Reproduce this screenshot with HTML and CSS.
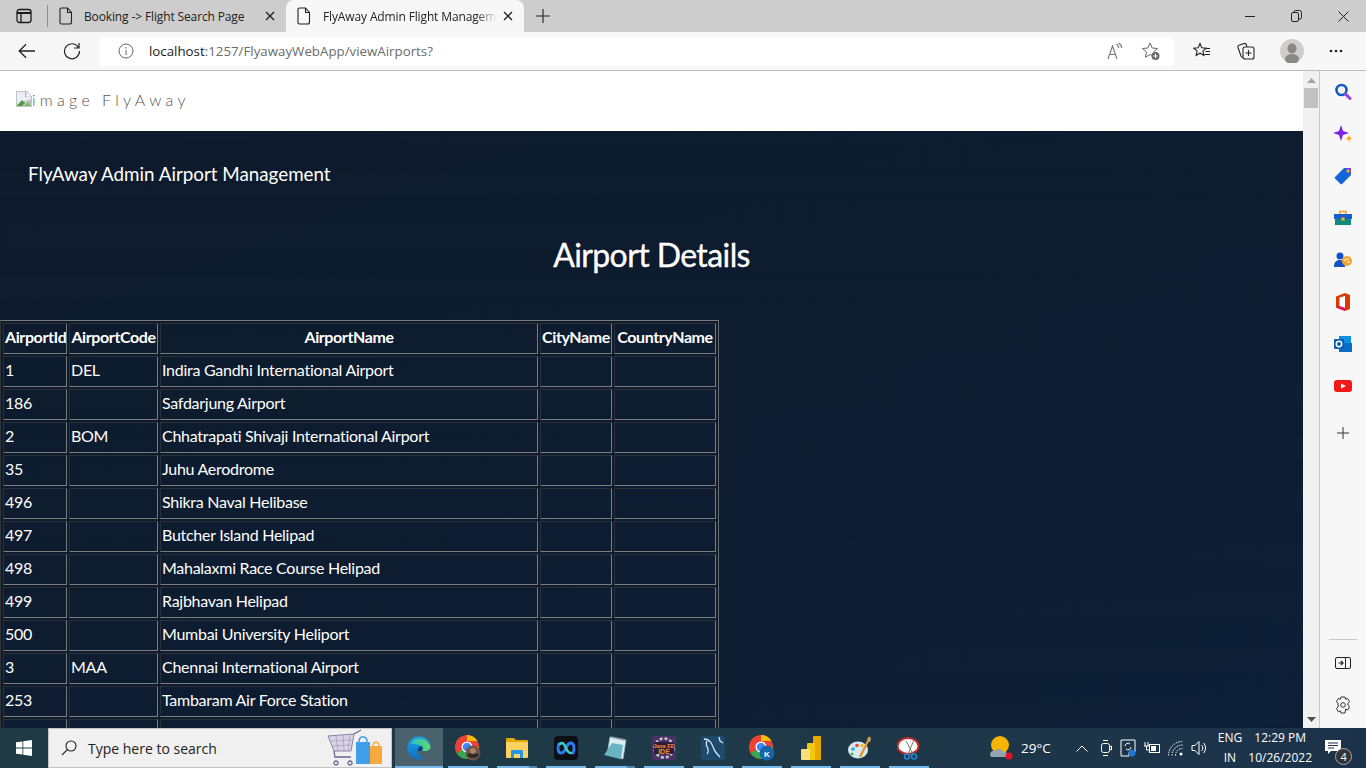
FILE: index.html
```html
<!DOCTYPE html>
<html lang="en">
<head>
<meta charset="utf-8">
<title>FlyAway Admin Flight Management</title>
<link rel="stylesheet" href="styles.css">
</head>
<body>
<div class="app">
  <div class="tabstrip">
    <div class="tabs-btn"><svg width="16" height="16" viewBox="0 0 16 16" fill="none" stroke="#1a1a1a" stroke-width="1.3"><rect x="1" y="1.5" width="14" height="13" rx="2.5"/><path d="M1 5h14" stroke-width="2"/><path d="M5 5v9"/></svg></div>
    <div class="tab-sep"></div>
    <div class="tab">
      <svg class="doc" width="14" height="18" viewBox="0 0 14 18" fill="none" stroke="#222" stroke-width="1.1"><path d="M2.5 1h6l4 4.5v9.5a2 2 0 0 1-2 2h-8a1.5 1.5 0 0 1-1.5-1.5V2.500A1.500 1.500 0 0 1 2.500 1zM8.500 1v4.500h4"/></svg>
      <span class="tab-label">Booking -&gt; Flight Search Page</span>
      <svg class="tab-x" width="10" height="10" viewBox="0 0 10 10" stroke="#222" stroke-width="1.4"><path d="M1 1l8 8M9 1l-8 8"/></svg>
    </div>
    <div class="tab tab-active">
      <svg class="doc" width="14" height="18" viewBox="0 0 14 18" fill="none" stroke="#222" stroke-width="1.1"><path d="M2.500 1h6l4 4.500v9.500a2 2 0 0 1-2 2h-8a1.500 1.500 0 0 1-1.500-1.500V2.500A1.500 1.500 0 0 1 2.500 1zM8.500 1v4.500h4"/></svg>
      <span class="tab-label tab-fade">FlyAway Admin Flight Management</span>
      <svg class="tab-x" width="10" height="10" viewBox="0 0 10 10" stroke="#222" stroke-width="1.4"><path d="M1 1l8 8M9 1l-8 8"/></svg>
    </div>
    <svg class="newtab" width="14" height="14" viewBox="0 0 14 14" stroke="#222" stroke-width="1.1"><path d="M7 0v14M0 7h14"/></svg>
    <div class="winbtns">
      <svg width="10" height="10" viewBox="0 0 10 10" stroke="#222"><path d="M0 5.500h10"/></svg>
      <svg width="11" height="12" viewBox="0 0 11 12" fill="none" stroke="#222"><rect x=".5" y="2.500" width="7" height="9" rx="1.500"/><path d="M3 2.500V2A1.500 1.500 0 0 1 4.500.5h4A2 2 0 0 1 10.500 2.500v5a1.500 1.500 0 0 1-1.500 1.500h-1.500"/></svg>
      <svg width="11" height="11" viewBox="0 0 11 11" stroke="#222"><path d="M.5.5l10 10M10.500.5l-10 10"/></svg>
    </div>
  </div>

  <div class="toolbar">
    <svg class="tool-back" width="18" height="16" viewBox="0 0 18 16" fill="none" stroke="#222" stroke-width="1.3"><path d="M17 8H1.500M8 1.200L1.200 8 8 14.800"/></svg>
    <svg class="tool-reload" width="18" height="18" viewBox="0 0 18 18" fill="none" stroke="#222" stroke-width="1.200"><path d="M15.500 5.500A7.500 7.500 0 1 0 16.500 9M16 1v5h-5"/></svg>
    <div class="address">
      <svg class="addr-info" width="16" height="16" viewBox="0 0 16 16" fill="none" stroke="#666"><circle cx="8" cy="8" r="7"/><path d="M8 7v5M8 4v1.500"/></svg>
      <span class="url"><span class="url-host">localhost</span>:1257/FlyawayWebApp/viewAirports?</span>
      <svg class="addr-read" width="16" height="18" viewBox="0 0 16 18" fill="none" stroke="#777" stroke-width="1.100"><path d="M1 17L5.500 4 10 17M2.500 12.500h6"/><path d="M9 2c1.800.6 2.600 2 2.800 4M11.500 1c2 .8 3 2.400 3.200 5"/></svg>
      <svg class="addr-fav" width="20" height="20" viewBox="0 0 20 20"><path d="M9 2l2.200 5 5.300.5-4 3.500 1.200 5.200L9 13.500l-4.700 2.700L5.500 11l-4-3.500L6.800 7z" fill="none" stroke="#666"/><circle cx="14.500" cy="15" r="4" fill="#666"/><path d="M14.500 12.800v4.400M12.300 15h4.400" stroke="#fff"/></svg>
    </div>
    <svg class="tool-favs" width="18" height="18" viewBox="0 0 18 18" fill="none" stroke="#222" stroke-width="1.100"><path d="M7 1.500l1.800 4.300 4.400.4-3.300 2.900 1 4.400L7 11.200 3.100 13.500l1-4.400L.8 6.200l4.400-.4zM12 6.500h5M12.500 9.500h4.500M11.500 12.500h5.500"/></svg>
    <svg class="tool-coll" width="18" height="18" viewBox="0 0 18 18" fill="none" stroke="#222" stroke-width="1.100"><rect x="6" y="5" width="11" height="12" rx="2"/><path d="M11.500 8v6M8.500 11h6M6 15.500c-1 0-1.500-.5-2-1.500L1 5.500c-.3-1 0-2 1-2.300L7 1.500c1-.3 2 .2 2.500 1.500l.3 2"/></svg>
    <svg class="tool-profile" width="24" height="24" viewBox="0 0 24 24"><circle cx="12" cy="12" r="12" fill="#d0ccca"/><ellipse cx="12" cy="9.500" rx="4.500" ry="5" fill="#8a8886"/><ellipse cx="12" cy="20" rx="7" ry="5" fill="#8a8886"/></svg>
    <svg class="tool-more" width="14" height="4" viewBox="0 0 14 4" fill="#222"><circle cx="2" cy="2" r="1.300"/><circle cx="7" cy="2" r="1.300"/><circle cx="12" cy="2" r="1.300"/></svg>
  </div>

  <div class="viewport">
    <div class="page">
      <header class="site-head">
        <svg class="broken" width="16" height="16" viewBox="0 0 16 16"><path d="M0 0h10l6 6v10H0z" fill="#c4c4c4"/><path d="M10 0l6 6h-6z" fill="#fff" stroke="#999" stroke-width=".6"/><path d="M1 1h8v5h6v2L1 13z" fill="#e8eefa"/><path d="M1 15l5-6 3 3-3 3z" fill="#4c9a3f"/><path d="M8 15l4-4 3 4z" fill="#7dbb6a"/></svg>
        <span class="alt">image</span>
        <span class="brand">FlyAway</span>
      </header>
      <main class="hero">
        <div class="admin-title">FlyAway Admin Airport Management</div>
        <h1 class="details-title">Airport Details</h1>
        <table class="grid">
          <colgroup><col class="c1"><col class="c2"><col class="c3"><col class="c4"><col class="c5"></colgroup>
          <thead><tr><th>AirportId</th><th>AirportCode</th><th>AirportName</th><th>CityName</th><th>CountryName</th></tr></thead>
          <tbody>
            <tr><td>1</td><td>DEL</td><td>Indira Gandhi International Airport</td><td></td><td></td></tr>
            <tr><td>186</td><td></td><td>Safdarjung Airport</td><td></td><td></td></tr>
            <tr><td>2</td><td>BOM</td><td>Chhatrapati Shivaji International Airport</td><td></td><td></td></tr>
            <tr><td>35</td><td></td><td>Juhu Aerodrome</td><td></td><td></td></tr>
            <tr><td>496</td><td></td><td>Shikra Naval Helibase</td><td></td><td></td></tr>
            <tr><td>497</td><td></td><td>Butcher Island Helipad</td><td></td><td></td></tr>
            <tr><td>498</td><td></td><td>Mahalaxmi Race Course Helipad</td><td></td><td></td></tr>
            <tr><td>499</td><td></td><td>Rajbhavan Helipad</td><td></td><td></td></tr>
            <tr><td>500</td><td></td><td>Mumbai University Heliport</td><td></td><td></td></tr>
            <tr><td>3</td><td>MAA</td><td>Chennai International Airport</td><td></td><td></td></tr>
            <tr><td>253</td><td></td><td>Tambaram Air Force Station</td><td></td><td></td></tr>
            <tr><td>254</td><td></td><td>Sholavaram Air Force Station</td><td></td><td></td></tr>
          </tbody>
        </table>
      </main>
    </div>

    <div class="scrollbar">
      <svg width="9" height="5" viewBox="0 0 9 5" fill="#a3a3a3"><path d="M4.500 0L9 5H0z"/></svg>
      <div class="thumb"></div>
      <div class="track"></div>
      <svg width="9" height="5" viewBox="0 0 9 5" fill="#505050"><path d="M0 0h9L4.500 5z"/></svg>
    </div>

    <aside class="sidebar">
      <svg width="20" height="20" viewBox="0 0 20 20" fill="none"><circle cx="8.500" cy="8" r="5" stroke="#0f5cc4" stroke-width="2.600"/><path d="M12.500 12l4.500 4.500" stroke="#9a3fe0" stroke-width="3" stroke-linecap="round"/></svg>
      <svg width="20" height="20" viewBox="0 0 20 20"><path d="M8 1l2 6 6 2-6 2-2 6-2-6-6-2 6-2z" fill="#7a22e6"/><path d="M16 11l1 2.500 2.500 1-2.500 1-1 2.500-1-2.500-2.500-1 2.500-1z" fill="#f9a825"/></svg>
      <svg width="20" height="20" viewBox="0 0 20 20"><path d="M11 2h6a1 1 0 0 1 1 1v6l-9 9a1 1 0 0 1-1.500 0L2 12.500a1 1 0 0 1 0-1.500z" fill="#1267d8"/><path d="M12 2h5a1 1 0 0 1 1 1v5z" fill="#7a45e0"/><circle cx="15" cy="5" r="1.500" fill="#ffb900"/></svg>
      <svg width="20" height="20" viewBox="0 0 20 20"><path d="M7 6V3.500h6V6" fill="none" stroke="#f0a020" stroke-width="1.500"/><rect x="1" y="6" width="18" height="5" fill="#1a5fc8"/><rect x="2" y="11" width="16" height="6" fill="#0f8a7e"/><rect x="8.500" y="9.500" width="3" height="3" fill="#ffb900"/></svg>
      <svg width="20" height="20" viewBox="0 0 20 20"><circle cx="7" cy="6" r="3.500" fill="#1450c8"/><path d="M1 17c0-5 2-7 6-7s5 3 5 7z" fill="#1450c8"/><circle cx="14" cy="11" r="5" fill="#f4a428"/><circle cx="12.500" cy="10" r="1" fill="#fff"/><circle cx="15.500" cy="12" r="1" fill="#fff"/><circle cx="15" cy="9" r=".8" fill="#fff"/></svg>
      <svg width="20" height="20" viewBox="0 0 20 20"><path d="M3 4.500L12 1l5 2v14l-5 2-9-3.500z" fill="#d83b01"/><path d="M12 4L6.500 5.500v9L12 16z" fill="#fff"/><path d="M3 15.500l3.500-1.500L12 16v3z" fill="#e3125b"/></svg>
      <svg width="20" height="20" viewBox="0 0 20 20"><rect x="6" y="2" width="12" height="8" fill="#0f8fe0"/><path d="M6 9h13v9H6z" fill="#0a6cc4"/><rect x="1" y="5" width="10" height="10" rx="1" fill="#0a5cb0"/><circle cx="6" cy="10" r="2.700" fill="none" stroke="#fff" stroke-width="1.500"/></svg>
      <svg width="20" height="20" viewBox="0 0 20 20"><rect x="1" y="4" width="18" height="12" rx="3" fill="#f01818"/><path d="M8 7.500L13 10l-5 2.500z" fill="#fff"/></svg>
      <svg class="side-plus" width="12" height="12" viewBox="0 0 12 12" stroke="#333"><path d="M6 0v12M0 6h12"/></svg>
      <div class="side-space"></div>
      <div class="side-rule"></div>
      <svg width="16" height="12" viewBox="0 0 16 12" fill="none" stroke="#222"><rect x=".5" y=".5" width="15" height="11" rx="1.500"/><path d="M10.500.5v11"/><path d="M3.500 6h4M6 4l2 2-2 2" stroke-width="1.200"/></svg>
      <svg class="side-gear" width="16" height="18" viewBox="0 0 16 18" fill="none" stroke="#333"><path d="M6 1h4l.6 2.300 2-.9 2 3.300-1.700 1.500v2l1.700 1.500-2 3.300-2-.9L10 17H6l-.6-2.100-2 .9-2-3.300L3.100 11V7L1.400 5.700l2-3.300 2 .9z"/><circle cx="8" cy="9" r="2.300"/></svg>
    </aside>
  </div>

  <footer class="taskbar">
    <div class="start"><svg width="16" height="16" viewBox="0 0 16 16" fill="#fff"><path d="M0 2.300l6.500-.9v6.200H0zM7.300 1.300L16 0v7.600H7.300zM0 8.400h6.500v6.200L0 13.700zM7.300 8.400H16V16l-8.700-1.300z"/></svg></div>
    <div class="search">
      <svg width="16" height="16" viewBox="0 0 16 16" fill="none" stroke="#222" stroke-width="1.100"><circle cx="10" cy="6" r="5"/><path d="M6.300 9.700L1 15"/></svg>
      <span class="search-text">Type here to search</span>
      <svg class="search-art" width="60" height="40" viewBox="0 0 60 40"><path d="M2 8l26-2-3 17H8z" fill="#d8d4e6" stroke="#8a82a8"/><path d="M5 13l21-1M6 18l19-1M10 8l2 15M17 7l1 16M24 7l-2 16" stroke="#a098bc" fill="none" stroke-width=".7"/><path d="M28 6l7-4M8 23l1 6h16M10 33a2 2 0 1 0 .1 0M24 33a2 2 0 1 0 .1 0" fill="none" stroke="#6a6290" stroke-width="1.300"/><path d="M30 14h14v22H30z" fill="#3f9fe8"/><path d="M33 14c0-7 8-7 8 0" fill="none" stroke="#3f9fe8" stroke-width="1.500"/><path d="M44 18h12v18H44z" fill="#f7a93b"/><path d="M47 18c0-5 6-5 6 0" fill="none" stroke="#f7a93b" stroke-width="1.300"/></svg>
    </div>
    <div class="apps">
      <div class="app-cell cell-active"><svg width="24" height="24" viewBox="0 0 24 24"><defs><linearGradient id="edgeB" x1="0" y1="0" x2="0" y2="1"><stop offset="0" stop-color="#1aa7e8"/><stop offset="1" stop-color="#0c6fc0"/></linearGradient><linearGradient id="edgeG" x1="0" y1="0" x2="1" y2="0"><stop offset="0" stop-color="#2fc0c8"/><stop offset="1" stop-color="#62d86a"/></linearGradient></defs><path d="M.5 12C.5 5 6 .5 12 .5c6.500 0 11.500 4.500 11.500 10 0 3-2.500 4.500-5.500 4.500h-7.500c0 3.500 3 6.500 7.500 7-1.500.7-3.500 1.500-6 1.500C5.500 23.500.5 18.500.5 12z" fill="url(#edgeB)"/><path d="M4 7c4-6 15-6 19.500 3.500 0 3-2.500 4.500-5.500 4.500h-3c1-3-1-6-5-6.500-2.500-.3-4.500 0-6-1.500z" fill="url(#edgeG)"/><path d="M10.500 15c0-3 2-5 4-5 1.500 0 1.500 3.500.5 5z" fill="#0f3f80"/></svg></div>
      <div class="app-cell"><svg width="26" height="26" viewBox="0 0 26 26"><circle cx="12" cy="12" r="12" fill="#ea4335"/><path d="M12 12L1.600 18A12 12 0 0 0 18 22.400z" fill="#34a853"/><path d="M12 0a12 12 0 0 1 10.400 6H12z" fill="#fbbc05"/><path d="M12 12h12a12 12 0 0 1-6 10.400z" fill="#fbbc05"/><circle cx="12" cy="12" r="5.500" fill="#fff"/><circle cx="12" cy="12" r="4.300" fill="#4285f4"/><circle cx="18" cy="18" r="7.500" fill="#6a5548"/><path d="M12 20c2-3 10-3 12 0-2 4-10 4-12 0z" fill="#2f2a2a"/><circle cx="18" cy="16" r="3" fill="#b08060"/></svg></div>
      <div class="app-cell app-stack"><svg width="22" height="20" viewBox="0 0 22 20"><path d="M0 1a1 1 0 0 1 1-1h7l2 2h11a1 1 0 0 1 1 1v3H0z" fill="#e0a800"/><path d="M0 4h22v15a1 1 0 0 1-1 1H1a1 1 0 0 1-1-1z" fill="#fbd35e"/><path d="M5 20v-7a1 1 0 0 1 1-1h10a1 1 0 0 1 1 1v7h-3v-4H8v4z" fill="#2196e8"/></svg></div>
      <div class="app-cell"><svg width="24" height="24" viewBox="0 0 24 24"><rect width="24" height="24" rx="4" fill="#0d0f16"/><path d="M5 8c-2 3-1 9 2 9s4-3 5-5c1-2 2-5 5-5s4 6 2 10" fill="none" stroke="#2a7df0" stroke-width="3" stroke-linecap="round"/><path d="M6 8c2-2 4-1 6 4 1.500 4 3 5 5 5" fill="none" stroke="#37d0c0" stroke-width="2.600" stroke-linecap="round"/></svg></div>
      <div class="app-cell app-stack"><svg width="24" height="24" viewBox="0 0 24 24"><path d="M7 1l16 3-3 19-16-4z" fill="#dcecf0" stroke="#9cb8c4" stroke-width=".7"/><path d="M8 1l14 3" stroke="#8a9aa4" stroke-width="1.500"/><path d="M1 19l8-12 11 2-2 14z" fill="#66b4c4"/></svg></div>
      <div class="app-cell"><svg width="24" height="24" viewBox="0 0 24 24"><rect width="24" height="24" rx="2" fill="#4a3168"/><circle cx="12" cy="12" r="9.500" fill="none" stroke="#c8c8c8" stroke-width="2.500" stroke-dasharray="3 2"/><rect x="2" y="6" width="20" height="12" fill="#2c1c40"/><text class="ide-text" x="12" y="11.500" text-anchor="middle">Java EE</text><text class="ide-text ide-big" x="12" y="17.500" text-anchor="middle">IDE</text></svg></div>
      <div class="app-cell"><svg width="24" height="24" viewBox="0 0 24 24"><rect width="24" height="24" rx="3" fill="#1d4a6c"/><path d="M3 3c6 0 8 5 10 10 1 3 3 5 6 8M6 5c-2 3 0 5 1 8 .5 2 0 4-1 5M18 1l1 4 3 2" fill="none" stroke="#d6e4ee" stroke-width="1.300"/></svg></div>
      <div class="app-cell"><svg width="26" height="26" viewBox="0 0 26 26"><circle cx="12" cy="12" r="12" fill="#ea4335"/><path d="M12 12L1.600 18A12 12 0 0 0 18 22.400z" fill="#34a853"/><path d="M12 0a12 12 0 0 1 10.400 6H12z" fill="#fbbc05"/><path d="M12 12h12a12 12 0 0 1-6 10.400z" fill="#fbbc05"/><circle cx="12" cy="12" r="5.500" fill="#fff"/><circle cx="12" cy="12" r="4.300" fill="#4285f4"/><circle cx="18" cy="18" r="7.500" fill="#1565a8"/><text class="k-text" x="18" y="21.500" text-anchor="middle">K</text></svg></div>
      <div class="app-cell"><svg width="20" height="24" viewBox="0 0 20 24"><rect x="12" width="8" height="24" rx="1" fill="#e8a800"/><rect x="6" y="7" width="8" height="17" rx="1" fill="#f2c811"/><rect y="13" width="9" height="11" rx="1" fill="#fbe07a"/></svg></div>
      <div class="app-cell"><svg width="24" height="24" viewBox="0 0 24 24"><ellipse cx="10" cy="14" rx="10" ry="8.500" fill="#d6e8f0"/><circle cx="5" cy="13" r="1.800" fill="#2f9fe0"/><circle cx="9" cy="9.500" r="1.800" fill="#e64a3c"/><circle cx="4" cy="18" r="1.500" fill="#4caf50"/><circle cx="14" cy="9.500" r="1.600" fill="#f4b400"/><path d="M22 1l-10 20" stroke="#e8902c" stroke-width="2.200"/><path d="M20 1l3 2-1 3-3-1z" fill="#c8a070"/></svg></div>
      <div class="app-cell"><svg width="24" height="24" viewBox="0 0 24 24"><ellipse cx="11" cy="10" rx="10.500" ry="8" fill="#fff" stroke="#c62828" stroke-width="2"/><path d="M9 5l7 13M17 4l-6 14" stroke="#777" fill="none"/><circle cx="17" cy="20.500" r="2.500" fill="none" stroke="#1e88d8" stroke-width="1.600"/><circle cx="10" cy="20.500" r="2.500" fill="none" stroke="#1e88d8" stroke-width="1.600"/></svg></div>
    </div>
    <div class="tray">
      <svg class="tray-weather" width="24" height="26" viewBox="0 0 24 26"><circle cx="11" cy="10" r="9" fill="#f7b500"/><path d="M2 22c-2-3 0-7 4-6 1-3 7-3 8 1 3-1 6 2 5 5z" fill="#93a4b0"/><circle cx="20" cy="21" r="3.500" fill="#e81123"/></svg>
      <span class="tray-temp">29°C</span>
      <svg class="tray-chev" width="12" height="7" viewBox="0 0 12 7" fill="none" stroke="#fff"><path d="M.5 6.500L6 1l5.500 5.500"/></svg>
      <svg class="tray-ic" width="12" height="20" viewBox="0 0 12 20" fill="none" stroke="#fff"><rect x="1.500" y="5.500" width="8" height="9" rx="2"/><path d="M9.500 9l2-1v4l-2-1M3 2.500h5M3 17.500h5"/></svg>
      <svg class="tray-ic" width="16" height="18" viewBox="0 0 16 18" fill="none" stroke="#fff"><path d="M1 1h14v12H9v4H1z"/><path d="M5 7a3 3 0 0 1 5-2M11 8a3 3 0 0 1-5 2"/><circle cx="12" cy="14" r="3.500" fill="#1e78d0" stroke="none"/></svg>
      <svg class="tray-ic" width="16" height="14" viewBox="0 0 16 14" fill="none" stroke="#fff"><rect x="5.500" y="3.500" width="10" height="8"/><path d="M1 1v4M4 1v4M0 5h5M2.500 5v4h3"/><rect x="7" y="5" width="5" height="5" fill="#fff" stroke="none"/></svg>
      <svg class="tray-ic" width="15" height="15" viewBox="0 0 15 15" fill="none" stroke="#fff"><path d="M.5 14.500a14 14 0 0 1 14-14M4 14.500a10.500 10.500 0 0 1 10.500-10.500M7.500 14.500a7 7 0 0 1 7-7" stroke-dasharray="1.500 1"/><circle cx="13" cy="13" r="1.500" fill="#fff" stroke="none"/></svg>
      <svg class="tray-ic" width="16" height="16" viewBox="0 0 16 16" fill="none" stroke="#fff"><path d="M1 5.500h3L8 1.500v13L4 10.500H1zM10.500 5a4 4 0 0 1 0 6M12.500 3a7 7 0 0 1 0 10"/></svg>
      <div class="tray-lang"><span>ENG</span><span>IN</span></div>
      <div class="tray-clock"><span>12:29 PM</span><span>10/26/2022</span></div>
      <div class="tray-note">
        <svg width="16" height="14" viewBox="0 0 16 14" fill="#fff"><path d="M0 0h16v11H6l-3 3v-3H0z"/><path d="M3 3h10M3 5.500h10M3 8h6" stroke="#1f3547"/></svg>
        <span class="note-badge">4</span>
      </div>
    </div>
  </footer>
</div>
</body>
</html>
```

FILE: styles.css
```css
* { box-sizing: border-box; }
html, body { margin: 0; padding: 0; height: 100%; overflow: hidden; }
body { font-family: "Open Sans", "Noto Sans", sans-serif; }
svg { display: block; flex: none; }

.app { width: 1366px; height: 768px; display: flex; flex-direction: column; }

/* tab strip */
.tabstrip { height: 32px; background: #cdcdcd; display: flex; align-items: center; flex: none; }
.tabs-btn { width: 47px; padding-left: 16px; }
.tab-sep { width: 1px; height: 22px; background: #8f8f8f; }
.tab { width: 238px; height: 32px; display: flex; align-items: center; padding-left: 11px; font-size: 12px; letter-spacing: -.13px; color: #222; }
.tab .doc { margin-right: 11px; }
.tab-label { width: 179px; white-space: nowrap; overflow: hidden; }
.tab-x { margin-left: 2px; }
.tab-active { background: #f7f7f7; border-radius: 8px 8px 0 0; }
.tab-active .doc { margin-right: 12px; }
.tab-fade { -webkit-mask-image: linear-gradient(to right, #000 88%, transparent 100%); mask-image: linear-gradient(to right, #000 88%, transparent 100%); }
.tab-active .tab-label { width: 174px; }
.tab-active .tab-x { margin-left: 6px; }
.newtab { margin-left: 12px; }
.winbtns { margin-left: auto; display: flex; align-items: center; gap: 36px; padding-right: 17px; }

/* toolbar */
.toolbar { height: 39px; background: #f7f7f7; border-bottom: 1px solid #bdbdbd; display: flex; align-items: center; flex: none; padding-left: 18px; }
.tool-reload { margin-left: 27px; }
.address { width: 1074px; height: 29px; margin-left: 19px; background: #fff; border-radius: 4px; display: flex; align-items: center; padding-left: 18px; font-size: 13.300px; color: #6b6b6b; }
.addr-info { margin-right: 15px; }
.url-host { color: #1a1a1a; }
.addr-read { margin-left: auto; }
.addr-fav { margin: 0 13px 0 18px; }
.tool-favs { margin-left: 19px; }
.tool-coll { margin-left: 26px; }
.tool-profile { margin-left: 25px; }
.tool-more { margin-left: 25px; }

/* page */
.viewport { flex: 1; min-height: 0; display: flex; }
.page { width: 1303px; overflow: hidden; background: #fff; }
.site-head { height: 60px; display: flex; align-items: center; padding-left: 16px; color: #555; font-family: Lato, sans-serif; font-size: 16px; letter-spacing: 4.300px; font-weight: 300; line-height: 20px; }
.alt { margin-top: -2px; }
.brand { margin: -2px 0 0 8px; }
.broken { margin-bottom: 4px; }
.hero {
  height: 700px; padding-top: 30px; color: #fff; font-family: Lato, sans-serif;
  background-color: #0d1c30;
  background-image:
    repeating-linear-gradient(90deg, rgba(0,0,0,.04) 0 1px, transparent 1px 37px),
    repeating-linear-gradient(0deg, rgba(255,255,255,.005) 0 24px, transparent 24px 53px),
    linear-gradient(160deg, #0d1a2c 0%, #0d1c30 50%, #0c2038 100%);
}
.admin-title { font-size: 18.800px; line-height: 26px; padding-left: 28px; }
.details-title { margin: 46px 0 0; font-size: 32px; line-height: 44px; font-weight: 400; text-align: center; letter-spacing: -.6px; -webkit-text-stroke: .35px #fff; }
.grid { margin-top: 43px; border-collapse: separate; border-spacing: 2px; border: 1px solid; border-color: #7a7a7a #6a6a6a #333 #333; table-layout: fixed; width: 719px; font-size: 16px; letter-spacing: -.27px; }
.c1 { width: 64px; } .c2 { width: 89px; } .c3 { width: 378px; } .c4 { width: 72px; } .c5 { width: 102px; }
.grid th, .grid td { height: 31px; padding: 0 1px 4px; border: 1px solid; border-color: #2b2f36 #7c7c7c #7c7c7c #2b2f36; white-space: nowrap; overflow: hidden; }
.grid th { font-weight: 700; text-align: center; letter-spacing: -.4px; }
.grid td { text-align: left; }

/* scrollbar */
.scrollbar { width: 17px; background: #f1f1f1; border-right: 1px solid #c8c8c8; display: flex; flex-direction: column; align-items: center; padding: 7px 0 6px; flex: none; }
.thumb { width: 14px; height: 20px; margin-top: 5px; background: #c1c1c1; }
.track { flex: 1; }

/* sidebar */
.sidebar { flex: 1; background: #f7f7f7; display: flex; flex-direction: column; align-items: center; gap: 22px; padding: 11px 0 14px; }
.side-plus { margin-top: 9px; }
.side-space { flex: 1; margin-bottom: -22px; }
.side-rule { width: 28px; height: 1px; background: #c8c8c8; margin-bottom: -5px; }
.side-gear { margin-top: 5px; }

/* taskbar */
.taskbar { height: 40px; flex: none; background: linear-gradient(90deg, #203b45 0%, #1f3a48 50%, #1c324a 100%); display: flex; align-items: stretch; color: #fff; }
.start { width: 48px; display: flex; align-items: center; justify-content: center; }
.search { width: 344px; background: #f0f0f0; border: 1px solid #c4c4c4; color: #222; display: flex; align-items: center; padding-left: 12px; font-size: 14px; }
.search-text { margin-left: 11px; }
.search-art { margin-left: auto; margin-right: 5px; }
.apps { display: flex; margin-left: 3px; }
.app-cell { width: 48px; margin-right: 1px; display: flex; align-items: center; justify-content: center; position: relative; }
.app-cell::after { content: ""; position: absolute; left: 4px; right: 4px; bottom: 0; height: 2px; background: #76b9ed; }
.app-stack::before { content: ""; position: absolute; right: 4px; bottom: 0; width: 8px; height: 2px; background: #4f86ad; z-index: 1; }
.cell-active { background: #4b626c; }
.cell-active::after { left: 0; right: 0; }
.ide-text { font: 700 5.500px "Liberation Sans", sans-serif; fill: #f49020; }
.ide-big { font-size: 7px; }
.k-text { font: 700 8px "Liberation Sans", sans-serif; fill: #fff; }
.tray { flex: 1; display: flex; align-items: center; font-size: 13px; padding-left: 55px; }
.tray-temp { margin-left: 8px; font-size: 13.500px; }
.tray-chev { margin-left: 25px; }
.tray-ic { margin-left: 8px; }
.tray-chev + .tray-ic { margin-left: 12px; }
.tray-lang, .tray-clock { display: flex; flex-direction: column; align-items: center; font-size: 12px; line-height: 20px; }
.tray-lang { margin-left: 11px; }
.tray-clock { margin-left: 6px; width: 64px; }
.tray-note { margin-left: 13px; position: relative; width: 30px; height: 30px; padding-top: 7px; }
.note-badge { position: absolute; right: 3px; bottom: -2px; width: 17px; height: 17px; border-radius: 50%; background: #333; border: 1px solid #aaa; font-size: 11px; line-height: 15px; text-align: center; }
```
